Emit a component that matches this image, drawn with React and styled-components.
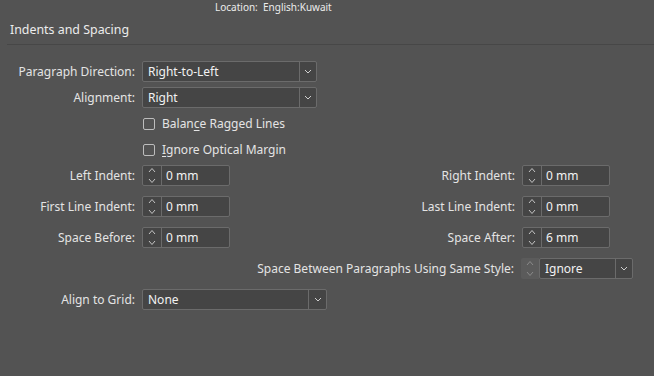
import React from "react";
import styled, { createGlobalStyle } from "styled-components";

const Global = createGlobalStyle`
  html, body {
    margin: 0;
    padding: 0;
    background: #535353;
  }
  body {
    font-family: "Noto Sans", "Open Sans", sans-serif;
    color: #e4e4e4;
  }
`

const Page = styled.div`
  width: 654px;
  height: 376px;
  background: #535353;
  overflow: hidden;
`
const TopBar = styled.div`
  height: 14px;
  line-height: 14px;
  padding-left: 215px;
  font-size: 10px;
  color: #ececec;
  white-space: nowrap;
`
const Header = styled.div`
  height: 28px;
  padding-top: 2px;
  line-height: 28px;
  margin-left: 7px;
  padding-left: 3px;
  font-size: 12.4px;
  color: #ececec;
  border-bottom: 1px solid #474747;
`
const Form = styled.div`
  display: flex;
  flex-direction: column;
  padding-top: 16px;
`
const Row = styled.div`
  display: flex;
  align-items: center;
  height: 21px;
  gap: 7px;
  margin-top: ${p => p.$gap || 0}px;
  width: ${p => (p.$width ? `${p.$width}px` : "auto")};
  padding-left: ${p => p.$indent || 0}px;
`
const Label = styled.span`
  flex: ${p => (p.$width ? `0 0 ${p.$width}px` : "1 1 auto")};
  text-align: right;
  font-size: 12px;
  white-space: nowrap;
  color: #e4e4e4;
`
const Box = styled.div`
  display: flex;
  height: 21px;
  box-sizing: border-box;
  width: ${p => p.$width}px;
  background: #454545;
  border: 1px solid #6b6b6b;
  border-radius: 2px;
`
const Value = styled.span`
  flex: 1;
  padding-left: ${p => p.$pad || 5}px;
  font-size: 12px;
  line-height: 19px;
  color: #f2f2f2;
  white-space: nowrap;
`
const ChevronCell = styled.span`
  flex: 0 0 ${p => p.$width}px;
  display: flex;
  align-items: center;
  justify-content: center;
  border-left: 1px solid #6b6b6b;
`
const StepCell = styled.span`
  flex: 0 0 ${p => p.$width}px;
  display: flex;
  align-items: center;
  justify-content: center;
  border-right: 1px solid #6b6b6b;
`
const Combo = styled.div`
  display: flex;
  height: 21px;
`
const DisabledStep = styled.span`
  width: 18px;
  height: 21px;
  display: flex;
  align-items: center;
  justify-content: center;
  background: #5b5b5b;
  border-radius: 2px 0 0 2px;
`
const CheckRow = styled.label`
  display: flex;
  align-items: center;
  gap: 7px;
  font-size: 12px;
  color: #e4e4e4;
  white-space: nowrap;
`
const CheckBox = styled.span`
  width: 12px;
  height: 12px;
  box-sizing: border-box;
  border: 1px solid #bdbdbd;
  border-radius: 2px;
`
const Key = styled.span`
  text-decoration: underline;
  text-underline-offset: 2px;
`

function Chevron() {
  return (
    <svg width="8" height="5" viewBox="0 0 8 5">
      <path d="M1 1l3 3 3-3" fill="none" stroke="#cfcfcf" strokeWidth="1" />
    </svg>
  );
}

function Arrows({ dim }) {
  const c = dim ? "#8a8a8a" : "#c4c4c4";
  return (
    <svg width="8" height="17" viewBox="0 0 8 17">
      <path d="M1 5l3-3.5L7 5" fill="none" stroke={c} strokeWidth="1" />
      <path d="M1 12l3 3.5L7 12" fill="none" stroke={c} strokeWidth="1" />
    </svg>
  );
}

function Select({ width, chevron = 16, value }) {
  return (
    <Box $width={width}>
      <Value>{value}</Value>
      <ChevronCell $width={chevron}><Chevron /></ChevronCell>
    </Box>
  );
}

function Stepper({ value }) {
  return (
    <Box $width={88}>
      <StepCell $width={18}><Arrows /></StepCell>
      <Value $pad={4}>{value}</Value>
    </Box>
  );
}

export default function App() {
  return (
    <Page>
      <Global />
      <TopBar>Location:&nbsp; English:Kuwait</TopBar>
      <Header>Indents and Spacing</Header>
      <Form>
        <Row>
          <Label $width={135}>Paragraph Direction:</Label>
          <Select width={175} value="Right-to-Left" />
        </Row>
        <Row $gap={5}>
          <Label $width={135}>Alignment:</Label>
          <Select width={175} value="Right" />
        </Row>
        <Row $gap={5} $indent={143}>
          <CheckRow>
            <CheckBox />
            <span>Balan<Key>c</Key>e Ragged Lines</span>
          </CheckRow>
        </Row>
        <Row $gap={5} $indent={143}>
          <CheckRow>
            <CheckBox />
            <span><Key>I</Key>gnore Optical Margin</span>
          </CheckRow>
        </Row>
        <Row $gap={5} $width={610}>
          <Label $width={135}>Left Indent:</Label>
          <Stepper value="0 mm" />
          <Label>Right Indent:</Label>
          <Stepper value="0 mm" />
        </Row>
        <Row $gap={10} $width={610}>
          <Label $width={135}>First Line Indent:</Label>
          <Stepper value="0 mm" />
          <Label>Last Line Indent:</Label>
          <Stepper value="0 mm" />
        </Row>
        <Row $gap={10} $width={610}>
          <Label $width={135}>Space Before:</Label>
          <Stepper value="0 mm" />
          <Label>Space After:</Label>
          <Stepper value="6 mm" />
        </Row>
        <Row $gap={10} $width={633}>
          <Label>Space Between Paragraphs Using Same Style:</Label>
          <Combo>
            <DisabledStep><Arrows dim /></DisabledStep>
            <Select width={94} chevron={16} value="Ignore" />
          </Combo>
        </Row>
        <Row $gap={10}>
          <Label $width={135}>Align to Grid:</Label>
          <Select width={185} chevron={17} value="None" />
        </Row>
      </Form>
    </Page>
  );
}
